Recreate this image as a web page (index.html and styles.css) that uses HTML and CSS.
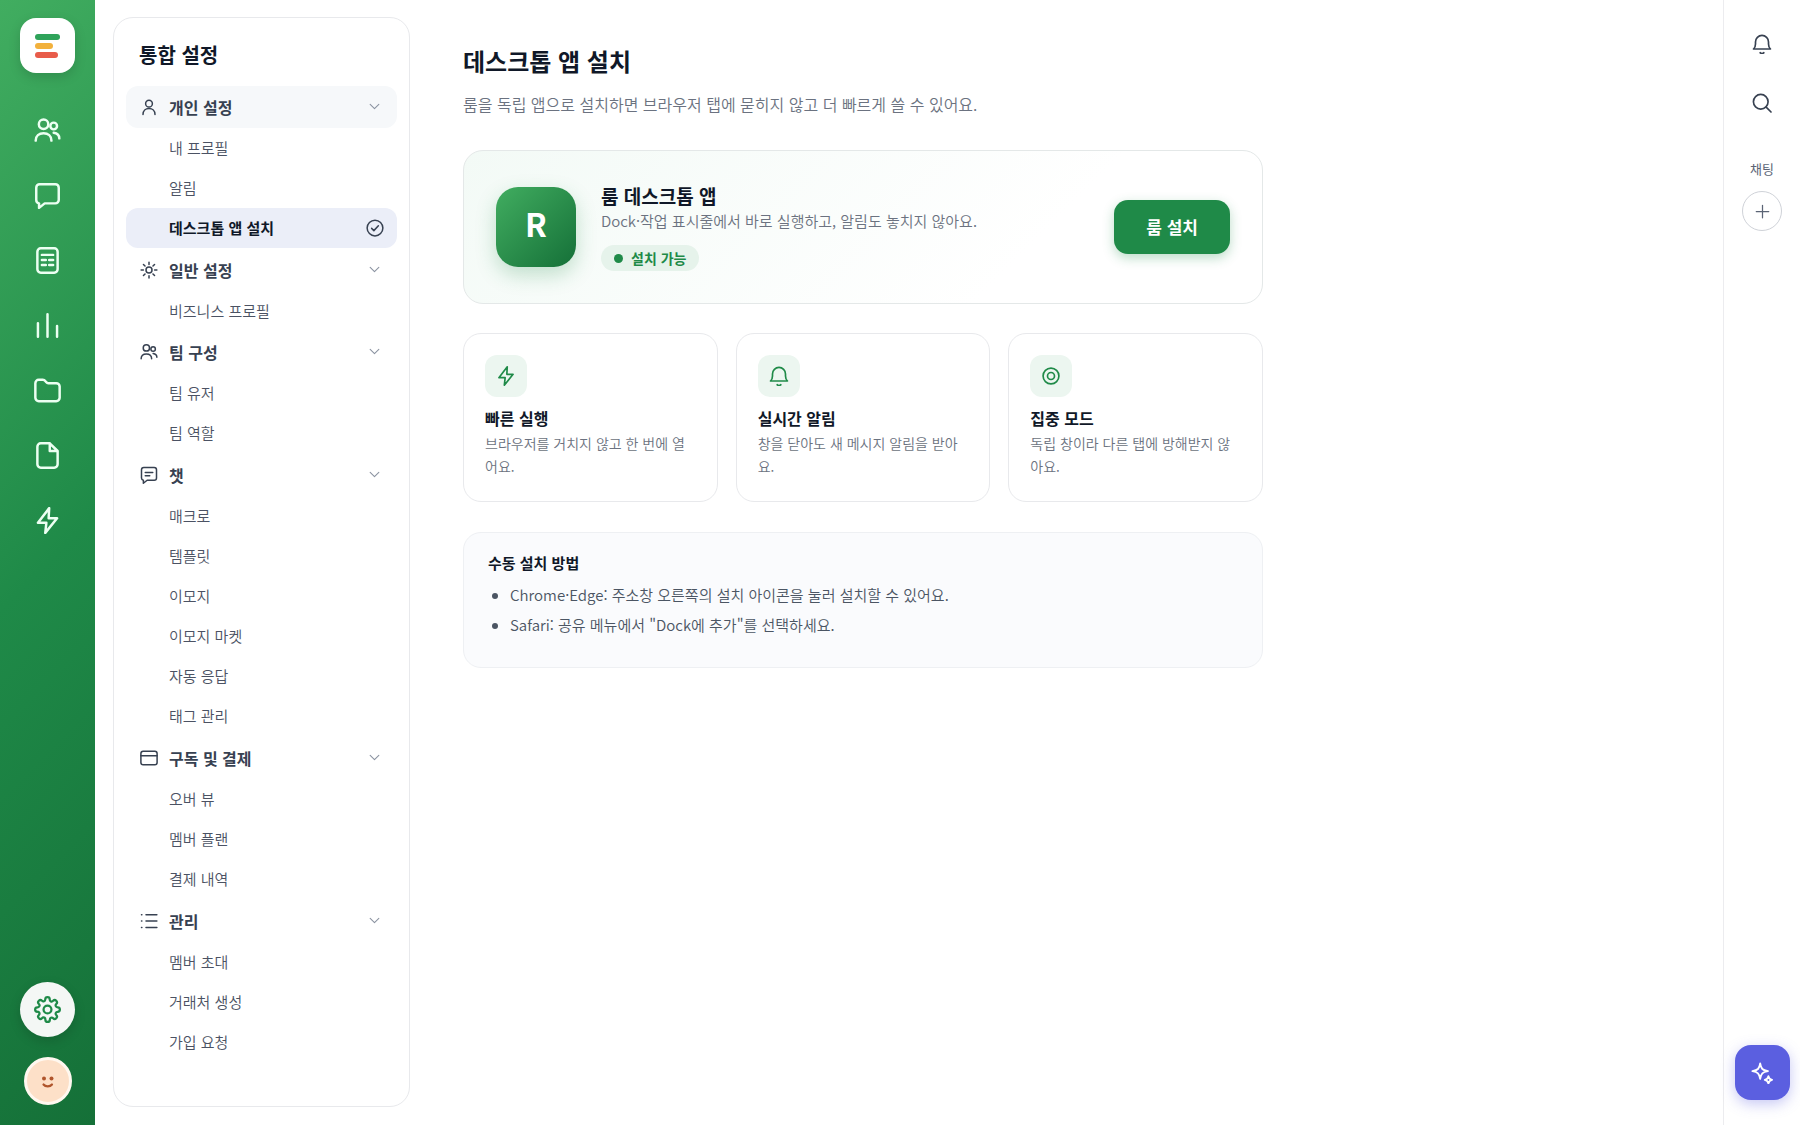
FILE: index.html
```html
<!DOCTYPE html>
<html lang="ko">
<head>
  <meta charset="utf-8">
  <title>데스크톱 앱 설치</title>
  <meta name="viewport" content="width=device-width,initial-scale=1.0">
  <link rel="stylesheet" href="styles.css">
</head>
<body>

  <!-- 아이콘 모음 -->
  <svg class="sprite" aria-hidden="true">
    <symbol id="i-users" viewBox="0 0 24 24">
      <circle cx="8.5" cy="6.500" r="4.200"/><circle cx="17.500" cy="8" r="3"/>
      <path d="M1.500 21c0-4 3-6.500 7-6.500s7 2.500 7 6.500M17.500 14c3 .5 5 2 5 5"/>
    </symbol>
    <symbol id="i-user" viewBox="0 0 24 24">
      <circle cx="12" cy="7.500" r="4.500"/><path d="M4 22c0-5 3.500-8 8-8s8 3 8 8"/>
    </symbol>
    <symbol id="i-chat" viewBox="0 0 24 24">
      <path d="M5 2h14a3 3 0 0 1 3 3v11a3 3 0 0 1-3 3H9.500L4.500 23v-4A3 3 0 0 1 2 16V5a3 3 0 0 1 3-3z"/>
    </symbol>
    <symbol id="i-chat-lines" viewBox="0 0 24 24">
      <path d="M5 2h14a3 3 0 0 1 3 3v11a3 3 0 0 1-3 3H9.500L4.500 23v-4A3 3 0 0 1 2 16V5a3 3 0 0 1 3-3zM7 8.500h10M7 13h6"/>
    </symbol>
    <symbol id="i-calc" viewBox="0 0 24 24">
      <rect x="3" y="1.200" width="18" height="21.600" rx="3"/>
      <path d="M7 7h10M7 11.500h3.500M13.500 11.500H17M7 16h3.500M13.500 16H17"/>
    </symbol>
    <symbol id="i-bars" viewBox="0 0 24 24"><path d="M3.500 10v12M12 2v20M20.500 12.500V22"/></symbol>
    <symbol id="i-folder" viewBox="0 0 24 24">
      <path d="M1.200 5.500a3 3 0 0 1 3-3h3.600a3 3 0 0 1 2.400 1.200l.8 1a2 2 0 0 0 1.600.8h7.200a3 3 0 0 1 3 3v10a3 3 0 0 1-3 3H4.200a3 3 0 0 1-3-3z"/>
    </symbol>
    <symbol id="i-file" viewBox="0 0 24 24">
      <path d="M14 1.200H6a3 3 0 0 0-3 3v15.600a3 3 0 0 0 3 3h12a3 3 0 0 0 3-3V8zM14 1.200V8h7"/>
    </symbol>
    <symbol id="i-bolt" viewBox="0 0 24 24"><path d="M13.500 1 3.500 14h7.500l-1 9L20.500 10H13z"/></symbol>
    <symbol id="i-gear" viewBox="0 0 24 24">
      <circle cx="12" cy="12" r="3.500"/>
      <path d="M19.4 15a1.650 1.650 0 0 0 .33 1.820l.06.06a2 2 0 0 1-2.830 2.830l-.06-.06a1.650 1.650 0 0 0-2.800 1.180V21a2 2 0 0 1-4 0v-.09a1.650 1.650 0 0 0-2.900-1.260l-.06.06a2 2 0 0 1-2.830-2.830l.06-.06A1.650 1.650 0 0 0 3.090 14H3a2 2 0 0 1 0-4h.09a1.650 1.650 0 0 0 1.260-2.900l-.06-.06a2 2 0 0 1 2.830-2.830l.06.06A1.650 1.650 0 0 0 10 3.090V3a2 2 0 0 1 4 0v.09a1.650 1.650 0 0 0 2.900 1.260l.06-.06a2 2 0 0 1 2.830 2.830l-.06.06A1.650 1.650 0 0 0 20.910 10H21a2 2 0 0 1 0 4h-.09a1.650 1.650 0 0 0-1.510 1z"/>
    </symbol>
    <symbol id="i-sun" viewBox="0 0 24 24">
      <circle cx="12" cy="12" r="4"/>
      <path d="M12 1.500v3M12 19.500v3M1.500 12h3M19.500 12h3M4.600 4.600l2.100 2.100M17.300 17.300l2.100 2.100M4.600 19.400l2.100-2.100M17.300 6.700l2.100-2.100"/>
    </symbol>
    <symbol id="i-card" viewBox="0 0 24 24">
      <rect x="1.200" y="3" width="21.600" height="18" rx="3"/><path d="M1.200 9h21.600"/>
    </symbol>
    <symbol id="i-list" viewBox="0 0 24 24"><path d="M8 3.500h14.500M8 12h14.500M8 20.500h14.500M2 3.500h.5M2 12h.5M2 20.500h.5"/></symbol>
    <symbol id="i-down" viewBox="0 0 24 24"><path d="m4 8 8 8 8-8"/></symbol>
    <symbol id="i-check" viewBox="0 0 24 24"><circle cx="12" cy="12" r="10.500"/><path d="m7.500 12.500 3 3 6-6.500"/></symbol>
    <symbol id="i-bell" viewBox="0 0 24 24">
      <path d="M1.800 18h20.400c-1.700-1.500-2.400-3-2.400-6V9.500a7.800 7.800 0 0 0-15.600 0V12c0 3-.7 4.500-2.400 6zM9.800 22.500c1.200 1 3.200 1 4.400 0"/>
    </symbol>
    <symbol id="i-target" viewBox="0 0 24 24"><circle cx="12" cy="12" r="9.500"/><circle cx="12" cy="12" r="4.200"/></symbol>
    <symbol id="i-search" viewBox="0 0 24 24"><circle cx="10.500" cy="10.500" r="8.800"/><path d="m17 17 5.800 5.800"/></symbol>
    <symbol id="i-plus" viewBox="0 0 24 24"><path d="M12 2v20M2 12h20"/></symbol>
    <symbol id="i-spark" viewBox="0 0 24 24">
      <path d="M10 1.500C11 7.500 12.500 9 18.500 10c-6 1-7.500 2.500-8.500 8.500C9 12.500 7.500 11 1.500 10 7.500 9 9 7.500 10 1.500z"/>
      <path d="M19 15.500c.5 2.500 1.500 3.500 4 4-2.500.5-3.500 1.500-4 4-.5-2.500-1.500-3.500-4-4 2.500-.5 3.500-1.500 4-4z"/>
    </symbol>
  </svg>

  <div class="layout">

    <nav class="rail" aria-label="주 메뉴">
      <a class="logo" href="#" aria-label="홈">
        <svg viewBox="0 0 26 26">
          <rect x="0" y="1" width="25" height="6" rx="3" fill="#2fa35a"/>
          <rect x="0" y="10" width="18" height="6" rx="3" fill="#f2b13c"/>
          <rect x="0" y="19" width="23" height="6" rx="3" fill="#e85c4a"/>
        </svg>
      </a>
      <div class="rail-menu">
        <a href="#" aria-label="연락처"><svg class="icon"><use href="#i-users"/></svg></a>
        <a href="#" aria-label="채팅"><svg class="icon"><use href="#i-chat"/></svg></a>
        <a href="#" aria-label="계산"><svg class="icon"><use href="#i-calc"/></svg></a>
        <a href="#" aria-label="통계"><svg class="icon"><use href="#i-bars"/></svg></a>
        <a href="#" aria-label="폴더"><svg class="icon"><use href="#i-folder"/></svg></a>
        <a href="#" aria-label="문서"><svg class="icon"><use href="#i-file"/></svg></a>
        <a href="#" aria-label="자동화"><svg class="icon"><use href="#i-bolt"/></svg></a>
      </div>
      <a class="rail-settings" href="#" aria-label="설정"><svg class="icon"><use href="#i-gear"/></svg></a>
      <a class="avatar" href="#" aria-label="내 계정">
        <svg viewBox="0 0 42 42">
          <circle cx="17" cy="18.500" r="2" fill="#b0552c"/><circle cx="24.500" cy="18.500" r="2" fill="#b0552c"/>
          <path d="M16.500 24.500c2 2.500 6.500 2.500 8.500 0" fill="none" stroke="#b0552c" stroke-width="2.200" stroke-linecap="round"/>
        </svg>
      </a>
    </nav>

    <aside class="settings">
      <h2>통합 설정</h2>

      <button class="group current" type="button"><svg class="icon"><use href="#i-user"/></svg><span>개인 설정</span><svg class="icon arrow"><use href="#i-down"/></svg></button>
      <a class="item" href="#">내 프로필</a>
      <a class="item" href="#">알림</a>
      <a class="item active" href="#">데스크톱 앱 설치<svg class="icon"><use href="#i-check"/></svg></a>

      <button class="group" type="button"><svg class="icon"><use href="#i-sun"/></svg><span>일반 설정</span><svg class="icon arrow"><use href="#i-down"/></svg></button>
      <a class="item" href="#">비즈니스 프로필</a>

      <button class="group" type="button"><svg class="icon"><use href="#i-users"/></svg><span>팀 구성</span><svg class="icon arrow"><use href="#i-down"/></svg></button>
      <a class="item" href="#">팀 유저</a>
      <a class="item" href="#">팀 역할</a>

      <button class="group" type="button"><svg class="icon"><use href="#i-chat-lines"/></svg><span>챗</span><svg class="icon arrow"><use href="#i-down"/></svg></button>
      <a class="item" href="#">매크로</a>
      <a class="item" href="#">템플릿</a>
      <a class="item" href="#">이모지</a>
      <a class="item" href="#">이모지 마켓</a>
      <a class="item" href="#">자동 응답</a>
      <a class="item" href="#">태그 관리</a>

      <button class="group" type="button"><svg class="icon"><use href="#i-card"/></svg><span>구독 및 결제</span><svg class="icon arrow"><use href="#i-down"/></svg></button>
      <a class="item" href="#">오버 뷰</a>
      <a class="item" href="#">멤버 플랜</a>
      <a class="item" href="#">결제 내역</a>

      <button class="group" type="button"><svg class="icon"><use href="#i-list"/></svg><span>관리</span><svg class="icon arrow"><use href="#i-down"/></svg></button>
      <a class="item" href="#">멤버 초대</a>
      <a class="item" href="#">거래처 생성</a>
      <a class="item" href="#">가입 요청</a>
    </aside>

    <main class="content">
      <h1>데스크톱 앱 설치</h1>
      <p class="lead">룸을 독립 앱으로 설치하면 브라우저 탭에 묻히지 않고 더 빠르게 쓸 수 있어요.</p>

      <section class="hero">
        <div class="app-icon">R</div>
        <div class="hero-text">
          <h2>룸 데스크톱 앱</h2>
          <p>Dock·작업 표시줄에서 바로 실행하고, 알림도 놓치지 않아요.</p>
          <span class="badge">설치 가능</span>
        </div>
        <button class="install" type="button">룸 설치</button>
      </section>

      <div class="features">
        <section class="feature">
          <div class="feature-icon"><svg class="icon"><use href="#i-bolt"/></svg></div>
          <h3>빠른 실행</h3>
          <p>브라우저를 거치지 않고 한 번에 열어요.</p>
        </section>
        <section class="feature">
          <div class="feature-icon"><svg class="icon"><use href="#i-bell"/></svg></div>
          <h3>실시간 알림</h3>
          <p>창을 닫아도 새 메시지 알림을 받아요.</p>
        </section>
        <section class="feature">
          <div class="feature-icon"><svg class="icon"><use href="#i-target"/></svg></div>
          <h3>집중 모드</h3>
          <p>독립 창이라 다른 탭에 방해받지 않아요.</p>
        </section>
      </div>

      <section class="manual">
        <h3>수동 설치 방법</h3>
        <ul>
          <li>Chrome·Edge: 주소창 오른쪽의 설치 아이콘을 눌러 설치할 수 있어요.</li>
          <li>Safari: 공유 메뉴에서 "Dock에 추가"를 선택하세요.</li>
        </ul>
      </section>
    </main>

    <aside class="tools">
      <button class="tool" type="button" aria-label="알림"><svg class="icon"><use href="#i-bell"/></svg></button>
      <button class="tool" type="button" aria-label="검색"><svg class="icon"><use href="#i-search"/></svg></button>
      <span class="tools-label">채팅</span>
      <button class="add" type="button" aria-label="채팅 추가"><svg class="icon"><use href="#i-plus"/></svg></button>
      <button class="assist" type="button" aria-label="도우미"><svg class="icon"><use href="#i-spark"/></svg></button>
    </aside>

  </div>

</body>
</html>
```

FILE: styles.css
```css
* {
  box-sizing: border-box;
}

body {
  margin: 0;
  font-family: 'Noto Sans CJK KR', sans-serif;
  font-size: 16px;
  font-weight: 350;
  line-height: 24px;
  color: #101828;
  background-color: #fff;
}

h1, h2, h3, p, ul {
  margin: 0;
}

a {
  color: inherit;
  text-decoration: none;
}

button {
  font: inherit;
  color: inherit;
  border: 0;
  padding: 0;
  background: none;
  cursor: pointer;
}

.sprite {
  position: absolute;
  width: 0;
  height: 0;
}

.icon {
  flex: none;
  width: 18px;
  height: 18px;
  fill: none;
  stroke: currentColor;
  stroke-width: 2;
  stroke-linecap: round;
  stroke-linejoin: round;
}

.layout {
  display: flex;
  min-height: 100vh;
}

/* 왼쪽 메뉴 */
.rail {
  flex: none;
  width: 95px;
  padding: 18px 0 20px;
  display: flex;
  flex-direction: column;
  align-items: center;
  color: #ecfff2;
  background: linear-gradient(135deg, #41ad60, #1f8a48 50%, #157038);
}

.logo {
  width: 55px;
  height: 55px;
  border-radius: 16px;
  background-color: #fff;
  box-shadow: 0 4px 12px rgba(0, 0, 0, 0.15);
  display: grid;
  place-items: center;
}

.logo svg {
  width: 26px;
  height: 26px;
}

.rail-menu {
  margin-top: 30px;
  display: flex;
  flex-direction: column;
  gap: 10px;
}

.rail-menu a {
  width: 55px;
  height: 55px;
  display: grid;
  place-items: center;
}

.rail-menu .icon,
.rail-settings .icon {
  width: 27px;
  height: 27px;
}

.rail-menu .icon {
  stroke-width: 2.2;
}

.rail-settings {
  margin-top: auto;
  width: 55px;
  height: 55px;
  border-radius: 50%;
  color: #1f8a48;
  background-color: #f4f7f5;
  box-shadow: 0 4px 12px rgba(0, 0, 0, 0.15);
  display: grid;
  place-items: center;
}

.avatar {
  margin-top: 20px;
  width: 48px;
  height: 48px;
  border: 3px solid #fff8f0;
  border-radius: 50%;
  background-color: #fde0c8;
}

/* 설정 목록 */
.settings {
  flex: none;
  width: 297px;
  margin: 17px 17px 18px 18px;
  padding: 24px 12px;
  border: 1px solid #e8e9ec;
  border-radius: 20px;
}

.settings h2 {
  padding: 0 13px;
  margin-bottom: 18px;
  font-size: 20px;
  line-height: 26px;
}

.group,
.item {
  display: flex;
  align-items: center;
  width: 100%;
  border-radius: 12px;
  color: #4b5263;
}

.group {
  height: 42px;
  padding: 0 16px 1px 14px;
  gap: 11px;
  font-weight: 700;
  color: #374151;
  text-align: left;
}

.group span {
  flex: 1;
}

.group .arrow {
  width: 13px;
  height: 13px;
  color: #8b93a1;
}

.item {
  height: 40px;
  padding: 0 13px 0 43px;
  justify-content: space-between;
  font-size: 15px;
}

/* 긴 묶음 뒤 간격 */
.item + .item + .group {
  margin-top: 1px;
}

.group.current {
  background-color: #f6f8fa;
}

.item.active {
  font-weight: 700;
  color: #101828;
  background-color: #ebeef8;
}

.item.active .icon {
  color: #374151;
}

/* 본문 */
.content {
  flex: 1;
  padding: 43px 36px;
}

.content h1 {
  font-size: 24px;
  line-height: 36px;
}

.lead {
  margin-top: 13px;
  color: #6b7280;
}

.hero,
.features,
.manual {
  max-width: 800px;
}

.hero {
  margin-top: 34px;
  padding: 32px;
  display: flex;
  align-items: center;
  gap: 25px;
  border: 1px solid #e4e8e8;
  border-radius: 20px;
  background: linear-gradient(135deg, #f3faf6, #fff 70%);
}

.app-icon {
  flex: none;
  width: 80px;
  height: 80px;
  padding-bottom: 9px;
  border-radius: 22px;
  display: grid;
  place-items: center;
  font-size: 32px;
  font-weight: 700;
  color: #fff;
  background: linear-gradient(135deg, #41ad60, #157038);
  box-shadow: 0 8px 20px rgba(31, 138, 72, 0.25);
}

.hero-text {
  flex: 1;
}

.hero-text h2 {
  font-size: 19px;
  line-height: 26px;
}

.hero-text p {
  font-size: 15px;
  line-height: 24px;
  color: #6b7280;
}

.badge {
  margin-top: 12px;
  padding: 0 13px;
  display: inline-flex;
  align-items: center;
  gap: 8px;
  border-radius: 13px;
  font-size: 14px;
  line-height: 26px;
  font-weight: 700;
  color: #1f8a48;
  background-color: #e6f3eb;
}

.badge::before {
  content: "";
  width: 9px;
  height: 9px;
  border-radius: 50%;
  background-color: #1f8a48;
}

.install {
  padding: 0 32px;
  height: 54px;
  border-radius: 14px;
  font-size: 17px;
  font-weight: 700;
  color: #fff;
  background-color: #1f8a48;
  box-shadow: 0 4px 12px rgba(31, 138, 72, 0.3);
}

.features {
  margin-top: 29px;
  display: grid;
  grid-template-columns: repeat(3, 1fr);
  gap: 18px;
}

.feature {
  padding: 21px 21px 23px;
  border: 1px solid #e8e9ec;
  border-radius: 18px;
}

.feature-icon {
  width: 42px;
  height: 42px;
  margin-bottom: 9px;
  border-radius: 12px;
  display: grid;
  place-items: center;
  color: #1f8a48;
  background-color: #ecf6f0;
}

.feature-icon .icon {
  width: 20px;
  height: 20px;
}

.feature h3 {
  font-size: 16px;
  line-height: 24px;
}

.feature p {
  margin-top: 2px;
  font-size: 14px;
  line-height: 23px;
  color: #6b7280;
}

.manual {
  margin-top: 30px;
  padding: 18px 24px 27px;
  border: 1px solid #eef0f3;
  border-radius: 18px;
  background-color: #fafbfd;
}

.manual h3 {
  font-size: 15px;
  line-height: 24px;
}

.manual ul {
  margin-top: 5px;
  padding-left: 22px;
}

.manual li {
  font-size: 15px;
  line-height: 30px;
  color: #4b5563;
}

/* 오른쪽 도구 막대 */
.tools {
  flex: none;
  width: 77px;
  padding: 24px 0 25px;
  display: flex;
  flex-direction: column;
  align-items: center;
  border-left: 1px solid #ececef;
}

.tool {
  width: 40px;
  height: 40px;
  margin-bottom: 19px;
  display: grid;
  place-items: center;
  color: #374151;
}

.tool .icon {
  width: 20px;
  height: 20px;
}

.tools-label {
  margin-top: 17px;
  font-size: 13px;
  font-weight: 400;
  line-height: 20px;
  color: #5b6475;
}

.add {
  margin-top: 12px;
  width: 40px;
  height: 40px;
  border: 1px solid #cfd2d8;
  border-radius: 50%;
  display: grid;
  place-items: center;
  color: #5b6475;
}

.add .icon {
  width: 15px;
  height: 15px;
}

.assist {
  margin-top: auto;
  width: 55px;
  height: 55px;
  border-radius: 16px;
  display: grid;
  place-items: center;
  color: #fff;
  background-color: #5b5fe0;
  box-shadow: 0 4px 14px rgba(91, 95, 224, 0.35);
}

.assist .icon {
  width: 22px;
  height: 22px;
}
```
